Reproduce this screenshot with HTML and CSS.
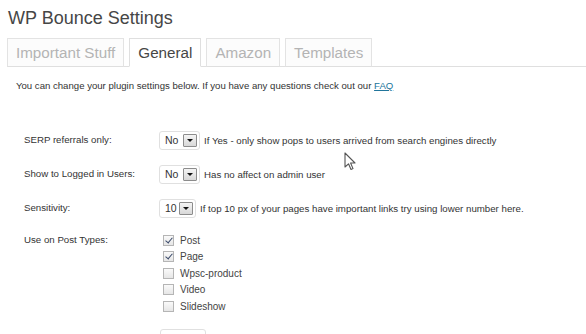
FILE: index.html
```html
<!DOCTYPE html>
<html lang="en">
<head>
  <meta charset="UTF-8">
  <title>WP Bounce Settings</title>
  <link rel="stylesheet" href="styles.css">
</head>
<body>
  <div class="wrap">
    <h2 class="title">WP Bounce Settings</h2>

    <div class="tabs">
      <span class="tab">Important Stuff</span>
      <span class="tab active">General</span>
      <span class="tab">Amazon</span>
      <span class="tab">Templates</span>
    </div>

    <p class="intro">You can change your plugin settings below. If you have any questions check out our <a href="#">FAQ</a></p>

    <div class="form">
      <div class="row">
        <div class="label">SERP referrals only:</div>
        <div class="field">
          <span class="select"><span class="val">No</span><span class="arrow"></span></span>
          <span class="note">If Yes - only show pops to users arrived from search engines directly</span>
        </div>
      </div>

      <div class="row">
        <div class="label">Show to Logged in Users:</div>
        <div class="field">
          <span class="select"><span class="val">No</span><span class="arrow"></span></span>
          <span class="note">Has no affect on admin user</span>
        </div>
      </div>

      <div class="row">
        <div class="label">Sensitivity:</div>
        <div class="field">
          <span class="select small"><span class="val">10</span><span class="arrow"></span></span>
          <span class="note">If top 10 px of your pages have important links try using lower number here.</span>
        </div>
      </div>

      <div class="row list-row">
        <div class="label">Use on Post Types:</div>
        <div class="checks">
          <div class="check"><span class="box on"></span>Post</div>
          <div class="check"><span class="box on"></span>Page</div>
          <div class="check"><span class="box"></span>Wpsc-product</div>
          <div class="check"><span class="box"></span>Video</div>
          <div class="check"><span class="box"></span>Slideshow</div>
        </div>
      </div>

      <div class="row">
        <div class="label">Delay:</div>
        <div class="field">
          <span class="input">1000</span>
        </div>
      </div>
    </div>
  </div>

  <svg class="cursor" width="13" height="20" viewBox="0 0 13 20">
    <path d="M1 1 L1 15 L4.5 11.8 L7 17.5 L9 16.6 L6.6 11 L11 11 Z" fill="#fff" stroke="#555" stroke-width="1.1" stroke-linejoin="round"/>
  </svg>
</body>
</html>
```

FILE: styles.css
```css
body {
  margin: 0;
  background: #fff;
  font-family: 'Liberation Sans', Arial, sans-serif;
  color: #333;
  overflow: hidden;
}

.wrap {
  padding-left: 7px;
}

.title {
  margin: 7px 0 0;
  padding-left: 1px;
  font-size: 18px;
  font-weight: normal;
  line-height: 22px;
  color: #464646;
}

.tabs {
  display: flex;
  gap: 5px;
  margin-top: 9px;
  border-bottom: 1px solid #dfdfdf;
}

.tab {
  height: 27px;
  line-height: 27px;
  padding: 0 8px;
  margin-bottom: -1px;
  border: 1px solid #e3e3e3;
  border-bottom: 1px solid #dfdfdf;
  font-size: 15.2px;
  color: #b4b4b4;
  background: #fcfcfc;
}

.tab.active {
  color: #464646;
  background: #fff;
  border-color: #dfdfdf;
  border-bottom-color: #fff;
}

.intro {
  margin: 13px 0 0 9px;
  font-size: 9.6px;
  line-height: 12px;
}

.intro a {
  color: #21759b;
}

.form {
  margin-top: 31px;
  padding-left: 17px;
  font-size: 9.7px;
}

.row {
  display: grid;
  grid-template-columns: 135px 1fr;
  padding: 7px 0;
  align-items: center;
}

.row .label {
  line-height: 20px;
}

.field {
  display: flex;
  align-items: center;
  height: 20px;
}

.select {
  display: flex;
  align-items: center;
  justify-content: space-between;
  box-sizing: border-box;
  width: 41px;
  height: 19px;
  padding: 0 2px 0 5px;
  border: 1px solid #e0e0e0;
  border-radius: 3px;
  font-size: 10.5px;
  background: #fff;
}

.select.small {
  width: 37px;
}

.arrow {
  position: relative;
  box-sizing: border-box;
  width: 14px;
  height: 13px;
  border: 1px solid #8c8c8c;
  border-radius: 1px;
  background: linear-gradient(#f4f4f4, #d8d8d8);
}

.arrow::after {
  content: "";
  position: absolute;
  left: 3px;
  top: 4px;
  border-left: 3px solid transparent;
  border-right: 3px solid transparent;
  border-top: 3px solid #111;
}

.note {
  margin-left: 4px;
}

.list-row {
  align-items: start;
}

.list-row .label {
  line-height: 16.5px;
}

.checks {
  padding-left: 4px;
}

.check {
  display: flex;
  align-items: center;
  height: 16.5px;
  font-size: 10px;
  color: #444;
}

.box {
  position: relative;
  box-sizing: border-box;
  width: 11px;
  height: 11px;
  margin-right: 6px;
  border: 1px solid #b5b5b5;
  background: linear-gradient(#fafafa, #e6e6e6);
}

.box.on::after {
  content: "";
  position: absolute;
  left: 3px;
  top: 0;
  width: 3px;
  height: 6px;
  border-right: 1.5px solid #3a4a6a;
  border-bottom: 1.5px solid #3a4a6a;
  transform: rotate(40deg);
}

.input {
  box-sizing: border-box;
  width: 46px;
  height: 20px;
  margin-left: 1px;
  padding: 3px 4px;
  border: 1px solid #e0e0e0;
  border-radius: 3px;
  font-size: 10.5px;
  line-height: 12px;
}

.cursor {
  position: absolute;
  left: 344px;
  top: 152px;
}
```
